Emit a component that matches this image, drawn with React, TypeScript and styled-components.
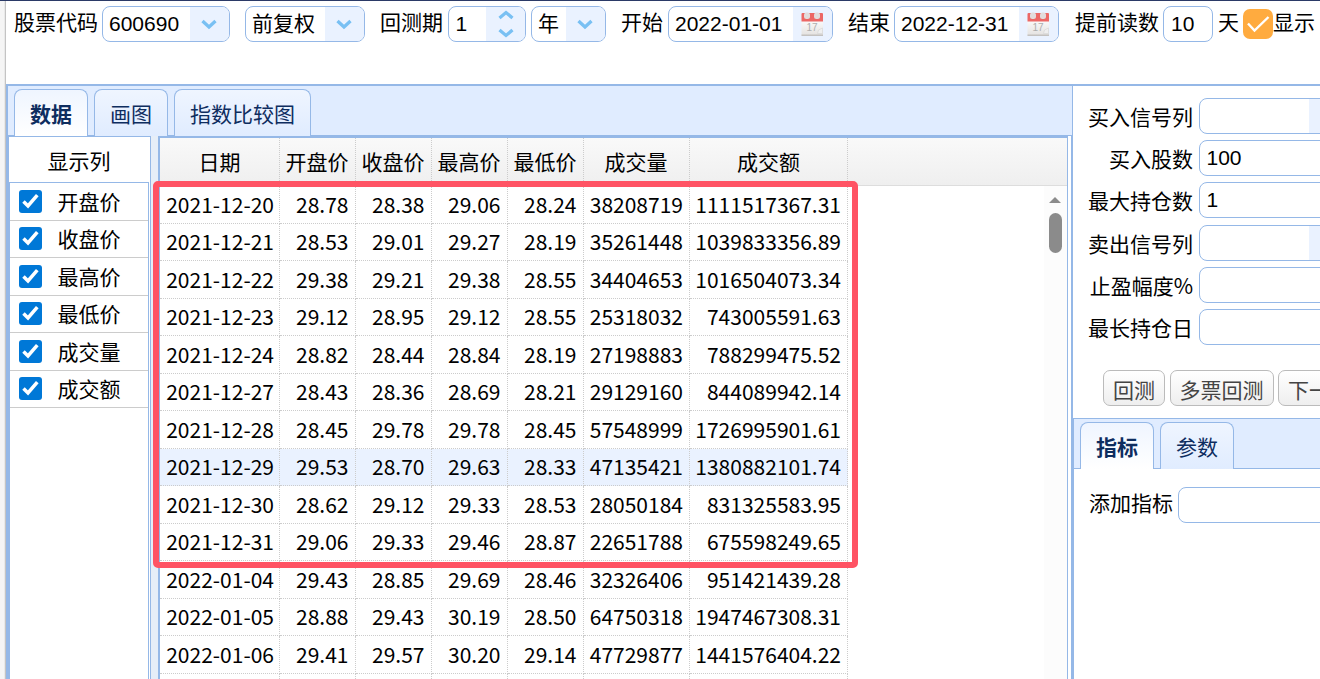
import React from 'react';
import styled, { createGlobalStyle, css } from 'styled-components';

const BORDER = '#95b8e7';
const ADDON = '#eaf2ff';
const CJK = "'Noto Sans CJK SC', sans-serif";
const LATIN = "'Liberation Sans', 'Noto Sans CJK SC', sans-serif";

const GlobalStyle = createGlobalStyle`
  *, *::before, *::after { box-sizing: border-box; }
  body { margin: 0; overflow: hidden; background: #fff; }
`;

const Page = styled.div`
  display: flex;
  width: 1320px;
  height: 679px;
  overflow: hidden;
  border-top: 1px solid #2b3a67;
  font-family: ${CJK};
  font-size: 21px;
  color: #000;
  background: #fff;
`;

const Gutter = styled.div`
  flex: none;
  width: 6px;
  background: #f5f5f5;
  border-right: 1px solid #c4c4c4;
  box-shadow: inset -1px 0 0 #e9e9e9;
`;

const Content = styled.div`
  flex: 1;
  min-width: 0;
  display: flex;
  flex-direction: column;
`;

const Toolbar = styled.div`
  flex: none;
  display: flex;
  align-items: flex-start;
  height: 83px;
  padding: 5px 0 0 8px;
  white-space: nowrap;
  overflow: hidden;
`;

const Label = styled.span<{ $after?: number }>`
  flex: none;
  line-height: 31px;
  margin-right: ${(p) => p.$after ?? 4}px;
`;

const Field = styled.div<{ $w: number; $after?: number }>`
  flex: none;
  display: flex;
  width: ${(p) => p.$w}px;
  height: 36px;
  margin-right: ${(p) => p.$after ?? 0}px;
  border: 1px solid ${BORDER};
  border-radius: 8px;
  background: #fff;
  overflow: hidden;
`;

const FieldText = styled.span<{ $cjk?: boolean; $pad?: number }>`
  flex: 1;
  padding-left: ${(p) => p.$pad ?? 6}px;
  font-family: ${(p) => (p.$cjk ? CJK : LATIN)};
  line-height: ${(p) => (p.$cjk ? 31 : 33)}px;
  white-space: nowrap;
`;

const Addon = styled.span`
  flex: none;
  display: flex;
  flex-direction: column;
  align-items: center;
  justify-content: center;
  width: 39px;
  padding-right: 1px;
  background: ${ADDON};
`;

const Orange = styled.span`
  flex: none;
  display: flex;
  width: 30px;
  height: 30px;
  margin-top: 3px;
  border-radius: 7px;
  background: #ffab3f;
`;

const Main = styled.div`
  flex: 1;
  min-height: 0;
  display: flex;
  border-top: 2px solid ${BORDER};
`;

const Left = styled.div`
  flex: none;
  width: 1067px;
  display: flex;
  flex-direction: column;
  border-left: 2px solid ${BORDER};
  background: #e0ecff;
`;

const TabStrip = styled.div<{ $edge?: boolean }>`
  flex: none;
  display: flex;
  gap: 6px;
  height: 50px;
  padding: 3px 0 0 6px;
  border-right: ${(p) => (p.$edge ? `1px solid ${BORDER}` : '0')};
  background: #e0ecff;
  box-shadow: inset 0 -1px 0 ${BORDER};
`;

const Tab = styled.div<{ $active?: boolean }>`
  height: 47px;
  padding: 0 15px;
  border: 1px solid ${BORDER};
  border-bottom: 0;
  border-radius: 8px 8px 0 0;
  line-height: 46px;
  color: #0e2d5f;
  background: linear-gradient(to bottom, #eff5ff, #e0ecff);
  ${(p) =>
    p.$active &&
    css`
      font-weight: 700;
      background: linear-gradient(to bottom, #eff5ff, #ffffff);
    `}
`;

const LeftBody = styled.div`
  flex: 1;
  min-height: 0;
  display: flex;
`;

const ColumnPanel = styled.div`
  flex: none;
  width: 143px;
  border: 1px solid ${BORDER};
  border-bottom: 0;
  background: #fff;
`;

const ColumnTitle = styled.div`
  height: 45px;
  line-height: 46px;
  padding-right: 1px;
  text-align: center;
`;

const ColumnList = styled.div`
  width: 140px;
  height: 100%;
  border: solid ${BORDER};
  border-width: 1px 1px 0 1px;
`;

const ColumnRow = styled.div<{ $h: number }>`
  display: flex;
  align-items: flex-start;
  height: ${(p) => p.$h}px;
  padding: ${(p) => p.$h - 31}px 0 0 9px;
  border-bottom: 1px solid #ccc;
`;

const Check = styled.span`
  display: flex;
  flex: none;
  width: 23px;
  height: 23px;
  margin-right: 15.5px;
  border-radius: 3px;
  background: #0078d7;
`;

const ColumnName = styled.span`
  line-height: 22px;
`;

const Splitter = styled.div`
  flex: none;
  width: 7px;
  background: #e6eef8;
`;

const Grid = styled.div`
  position: relative;
  flex: 1;
  min-width: 0;
  display: flex;
  flex-direction: column;
  border-left: 2px solid ${BORDER};
  border-top: 2px solid ${BORDER};
  background: #fff;
`;

const GridHead = styled.div`
  flex: none;
  display: flex;
  height: 48px;
  border-bottom: 1px solid #ddd;
  background: linear-gradient(to bottom, #f9f9f9, #efefef);
`;

const Cell = styled.div<{ $w: number; $pad: number }>`
  flex: none;
  width: ${(p) => p.$w}px;
  padding-right: ${(p) => p.$pad}px;
  border-right: 1px dotted #ccc;
  text-align: right;
  white-space: nowrap;
`;

const HeadCell = styled(Cell)`
  text-align: center;
  line-height: 46px;
`;

const GridBody = styled.div`
  flex: 1;
  min-height: 0;
  display: flex;
  justify-content: space-between;
`;

const Rows = styled.div`
  height: 493px;
  overflow: hidden;
`;

const Row = styled.div<{ $h: number; $sel: boolean }>`
  display: flex;
  height: ${(p) => p.$h}px;
  line-height: ${(p) => (p.$h === 38 ? 36 : 34)}px;
  background: ${(p) => (p.$sel ? '#eaf2ff' : '#fff')};
  ${Cell} {
    border-bottom: 1px dotted #ccc;
  }
`;

const Scroll = styled.div`
  width: 23px;
  padding: 11px 0 0 5px;
  background: #fcfcfc;
`;

const ScrollUp = styled.svg`
  display: block;
  margin-bottom: 10px;
`;

const Thumb = styled.div`
  width: 13px;
  height: 40px;
  border-radius: 7px;
  background: #8b8b8b;
`;

const Highlight = styled.div`
  position: absolute;
  left: -7px;
  top: 43px;
  width: 705px;
  height: 387px;
  border: 6px solid #ff5364;
  border-radius: 5px;
`;

const Edge = styled.div`
  flex: none;
  width: 6px;
  background: #fff;
  border-left: 1px solid ${BORDER};
  border-right: 2px solid ${BORDER};
`;

const Right = styled.div`
  flex: 1;
  min-width: 0;
  display: flex;
  flex-direction: column;
  overflow: hidden;
  background: #fff;
`;

const Form = styled.div`
  flex: none;
  height: 284px;
  padding-top: 12px;
`;

const FormRow = styled.div<{ $gap?: number }>`
  display: flex;
  margin-bottom: ${(p) => p.$gap ?? 6}px;
`;

const FormLabel = styled.span`
  flex: none;
  width: 120px;
  margin-right: 6px;
  text-align: right;
  line-height: 36px;
  white-space: nowrap;
`;

const Buttons = styled.div`
  flex: none;
  display: flex;
  gap: 4.5px;
  height: 48px;
  padding-left: 30px;
`;

const Button = styled.button`
  flex: none;
  height: 36px;
  padding: 0 9px;
  border: 1px solid #bbb;
  border-radius: 7px;
  background: linear-gradient(to bottom, #ffffff, #eeeeee);
  color: #444;
  font: 21px/37px ${CJK};
`;

const LowerTabs = styled.div`
  flex: 1;
  border: solid ${BORDER};
  border-width: 1px 0 0 1px;
`;

const AddRow = styled.div`
  display: flex;
  padding: 18px 0 0 15px;
`;

const AddLabel = styled.span`
  flex: none;
  width: 89px;
  line-height: 31px;
`;

const Chevron = ({ up, small }: { up?: boolean; small?: boolean }) => (
  <svg width="18" height={small ? 10 : 12} viewBox={small ? '0 0 18 10' : '0 0 18 12'} fill="none">
    <path
      d={small ? (up ? 'M2.5 8 9 2.6 15.5 8' : 'M2.5 2 9 7.4 15.5 2') : 'M2.5 3 9 9 15.5 3'}
      stroke="#79c0f3"
      strokeWidth="3.3"
    />
  </svg>
);

const SpinIcons = styled.span`
  display: flex;
  flex-direction: column;
  gap: 8px;
  margin: 0 0 1px 2px;
`;

const CalendarIcon = () => (
  <svg width="24" height="26" viewBox="0 0 24 26">
    <defs>
      <linearGradient id="paper" x1="0" y1="0" x2="0" y2="1">
        <stop offset="0" stopColor="#fbfbfb" />
        <stop offset="1" stopColor="#e4e2e0" />
      </linearGradient>
    </defs>
    <rect x="1.5" y="9" width="21.5" height="15.5" rx="0.5" fill="url(#paper)" />
    <rect x="1.5" y="23.5" width="21.5" height="1.5" fill="#c4c2c0" />
    <path d="M1.5 3q0-1 1-1h19.5q1 0 1 1v7.5H1.5z" fill="#ec6765" />
    <rect x="4" y="1.5" width="6" height="6.5" rx="2.5" fill="#e2dcdc" />
    <rect x="14" y="1.5" width="6" height="6.5" rx="2.5" fill="#e2dcdc" />
    <text x="12" y="19.5" fontSize="10" textAnchor="middle" fill="#adadad" fontFamily="Liberation Sans, sans-serif">
      17
    </text>
    <path d="M17.5 22.5 18.5 19 22.5 17v5.5z" fill="#efefef" stroke="#d4d4d4" strokeWidth="0.6" />
  </svg>
);

const WIDTHS = [120, 76, 76, 76, 76, 106, 158];
const CELL_PADS = [5, 6.5, 6.5, 6.5, 6.5, 6, 6];
const HEAD_PADS = [0, 1, 1, 1, 1, 1, 0];
const HEADS = ['日期', '开盘价', '收盘价', '最高价', '最低价', '成交量', '成交额'];
const DATA = [
  ['2021-12-20', '28.78', '28.38', '29.06', '28.24', '38208719', '1111517367.31'],
  ['2021-12-21', '28.53', '29.01', '29.27', '28.19', '35261448', '1039833356.89'],
  ['2021-12-22', '29.38', '29.21', '29.38', '28.55', '34404653', '1016504073.34'],
  ['2021-12-23', '29.12', '28.95', '29.12', '28.55', '25318032', '743005591.63'],
  ['2021-12-24', '28.82', '28.44', '28.84', '28.19', '27198883', '788299475.52'],
  ['2021-12-27', '28.43', '28.36', '28.69', '28.21', '29129160', '844089942.14'],
  ['2021-12-28', '28.45', '29.78', '29.78', '28.45', '57548999', '1726995901.61'],
  ['2021-12-29', '29.53', '28.70', '29.63', '28.33', '47135421', '1380882101.74'],
  ['2021-12-30', '28.62', '29.12', '29.33', '28.53', '28050184', '831325583.95'],
  ['2021-12-31', '29.06', '29.33', '29.46', '28.87', '22651788', '675598249.65'],
  ['2022-01-04', '29.43', '28.85', '29.69', '28.46', '32326406', '951421439.28'],
  ['2022-01-05', '28.88', '29.43', '30.19', '28.50', '64750318', '1947467308.31'],
  ['2022-01-06', '29.41', '29.57', '30.20', '29.14', '47729877', '1441576404.22'],
  ['', '', '', '', '', '', ''],
];

const FORM = [
  { label: '买入信号列', combo: true },
  { label: '买入股数', value: '100' },
  { label: '最大持仓数', value: '1', gap: 7 },
  { label: '卖出信号列', combo: true },
  { label: '止盈幅度%' },
  { label: '最长持仓日' },
];

const rowHeight = (i: number) => (i % 2 === 0 ? 38 : 37);

export default function App() {
  return (
    <Page>
      <GlobalStyle />
      <Gutter />
      <Content>
        <Toolbar>
          <Label>股票代码</Label>
          <Field $w={128} $after={15}>
            <FieldText>600690</FieldText>
            <Addon><Chevron /></Addon>
          </Field>
          <Field $w={120} $after={15}>
            <FieldText $cjk>前复权</FieldText>
            <Addon><Chevron /></Addon>
          </Field>
          <Label $after={5}>回测期</Label>
          <Field $w={78} $after={5}>
            <FieldText $pad={6.5}>1</FieldText>
            <Addon>
              <SpinIcons><Chevron up small /><Chevron small /></SpinIcons>
            </Addon>
          </Field>
          <Field $w={75} $after={15}>
            <FieldText $cjk>年</FieldText>
            <Addon><Chevron /></Addon>
          </Field>
          <Label $after={5}>开始</Label>
          <Field $w={165} $after={15}>
            <FieldText>2022-01-01</FieldText>
            <Addon><CalendarIcon /></Addon>
          </Field>
          <Label>结束</Label>
          <Field $w={165} $after={16}>
            <FieldText>2022-12-31</FieldText>
            <Addon><CalendarIcon /></Addon>
          </Field>
          <Label>提前读数</Label>
          <Field $w={50} $after={5}>
            <FieldText $pad={7}>10</FieldText>
          </Field>
          <Label>天</Label>
          <Orange>
            <svg width="30" height="30" viewBox="0 0 30 30" fill="none">
              <path d="M5 14.5 11.5 21.5 25.5 8" stroke="#fff" strokeWidth="2.4" />
            </svg>
          </Orange>
          <Label>显示</Label>
        </Toolbar>
        <Main>
          <Left>
            <TabStrip $edge>
              <Tab $active>数据</Tab>
              <Tab>画图</Tab>
              <Tab>指数比较图</Tab>
            </TabStrip>
            <LeftBody>
              <ColumnPanel>
                <ColumnTitle>显示列</ColumnTitle>
                <ColumnList>
                  {HEADS.slice(1).map((name, i) => (
                    <ColumnRow key={name} $h={rowHeight(i)}>
                      <Check>
                        <svg width="23" height="23" viewBox="0 0 23 23" fill="none">
                          <path d="M4.5 11.5 9 16 18.3 5.2" stroke="#fff" strokeWidth="3.5" />
                        </svg>
                      </Check>
                      <ColumnName>{name}</ColumnName>
                    </ColumnRow>
                  ))}
                </ColumnList>
              </ColumnPanel>
              <Splitter />
              <Grid>
                <GridHead>
                  {HEADS.map((h, i) => (
                    <HeadCell key={h} $w={WIDTHS[i]} $pad={HEAD_PADS[i]}>{h}</HeadCell>
                  ))}
                </GridHead>
                <GridBody>
                  <Rows>
                    {DATA.map((r, i) => (
                      <Row key={i} $h={rowHeight(i)} $sel={i === 7}>
                        {r.map((v, j) => (
                          <Cell key={j} $w={WIDTHS[j]} $pad={CELL_PADS[j]}>{v}</Cell>
                        ))}
                      </Row>
                    ))}
                  </Rows>
                  <Scroll>
                    <ScrollUp width="12" height="6" viewBox="0 0 12 6">
                      <path d="M0 6 6 0 12 6z" fill="#8b8b8b" />
                    </ScrollUp>
                    <Thumb />
                  </Scroll>
                </GridBody>
                <Highlight />
              </Grid>
              <Edge />
            </LeftBody>
          </Left>
          <Right>
            <Form>
              {FORM.map((f) => (
                <FormRow key={f.label} $gap={f.gap}>
                  <FormLabel>{f.label}</FormLabel>
                  <Field $w={150}>
                    <FieldText $pad={6.5}>{f.value}</FieldText>
                    {f.combo && <Addon />}
                  </Field>
                </FormRow>
              ))}
            </Form>
            <Buttons>
              <Button>回测</Button>
              <Button>多票回测</Button>
              <Button>下一步</Button>
            </Buttons>
            <LowerTabs>
              <TabStrip>
                <Tab $active>指标</Tab>
                <Tab>参数</Tab>
              </TabStrip>
              <AddRow>
                <AddLabel>添加指标</AddLabel>
                <Field $w={170}>
                  <FieldText />
                </Field>
              </AddRow>
            </LowerTabs>
          </Right>
        </Main>
      </Content>
    </Page>
  );
}
